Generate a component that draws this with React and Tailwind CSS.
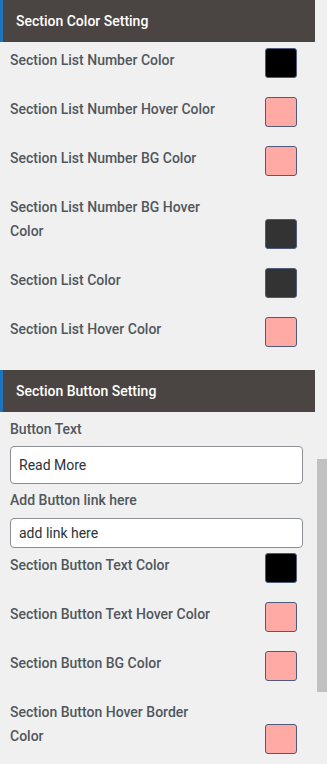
const COLOR_ROWS = [
  { label: "Section List Number Color", color: "bg-[#000000]" },
  { label: "Section List Number Hover Color", color: "bg-[#ffaaa5]" },
  { label: "Section List Number BG Color", color: "bg-[#ffaaa5]" },
  { label: "Section List Number BG Hover Color", color: "bg-[#333333]" },
  { label: "Section List Color", color: "bg-[#333333]" },
  { label: "Section List Hover Color", color: "bg-[#ffaaa5]" },
];

const BUTTON_ROWS = [
  { label: "Section Button Text Color", color: "bg-[#000000]" },
  { label: "Section Button Text Hover Color", color: "bg-[#ffaaa5]" },
  { label: "Section Button BG Color", color: "bg-[#ffaaa5]" },
  { label: "Section Button Hover Border Color", color: "bg-[#ffaaa5]" },
];

function SectionHeader({ title }) {
  return (
    <div className="h-[42px] w-[315px] bg-[#4a4543] border-l-[3px] border-[#1e73be] pl-[13px] flex items-center">
      <span className="text-white text-[14px] font-medium">{title}</span>
    </div>
  );
}

function ColorRow({ label, color }) {
  return (
    <div className="flex items-end justify-between">
      <span className="w-[207px] leading-[24px] pb-[6px] text-[14px] font-medium text-[#50575e]">
        {label}
      </span>
      <div className={`w-[32px] h-[30px] rounded-[3px] border border-[#4f5b7c] shrink-0 ${color}`} />
    </div>
  );
}

export default function App() {
  return (
    <div
      className="relative w-[327px] min-h-[764px] bg-[#f0f0f0] overflow-hidden"
      style={{ fontFamily: "Roboto, 'Liberation Sans', sans-serif" }}
    >
      {/* Section Color Setting */}
      <SectionHeader title="Section Color Setting" />
      <div className="w-[315px] pt-[6px] pl-[10px] pr-[18px] flex flex-col gap-[19px]">
        {COLOR_ROWS.map((r) => (
          <ColorRow key={r.label} {...r} />
        ))}
      </div>

      {/* Section Button Setting */}
      <div className="mt-[23px]">
        <SectionHeader title="Section Button Setting" />
      </div>
      <div className="w-[315px] pl-[10px] pr-[18px] pt-[5px]">
        <div className="leading-[24px] text-[14px] font-medium text-[#50575e]">Button Text</div>
        <div className="mt-[5px] w-[293px] h-[38px] bg-white border border-[#8c8f94] rounded-[4px] px-[8px] flex items-center text-[14px] text-[#2c3338]">
          Read More
        </div>
        <div className="mt-[4px] leading-[24px] text-[14px] font-medium text-[#50575e]">Add Button link here</div>
        <div className="mt-[6px] w-[293px] h-[30px] bg-white border border-[#8c8f94] rounded-[4px] px-[8px] flex items-center text-[14px] text-[#2c3338]">
          add link here
        </div>
        <div className="mt-[5px] flex flex-col gap-[19px]">
          {BUTTON_ROWS.map((r) => (
            <ColorRow key={r.label} {...r} />
          ))}
        </div>
      </div>

      {/* scrollbar thumb */}
      <div className="absolute left-[317px] top-[459px] w-[10px] h-[233px] bg-[#c1c1c1]" />
    </div>
  );
}
